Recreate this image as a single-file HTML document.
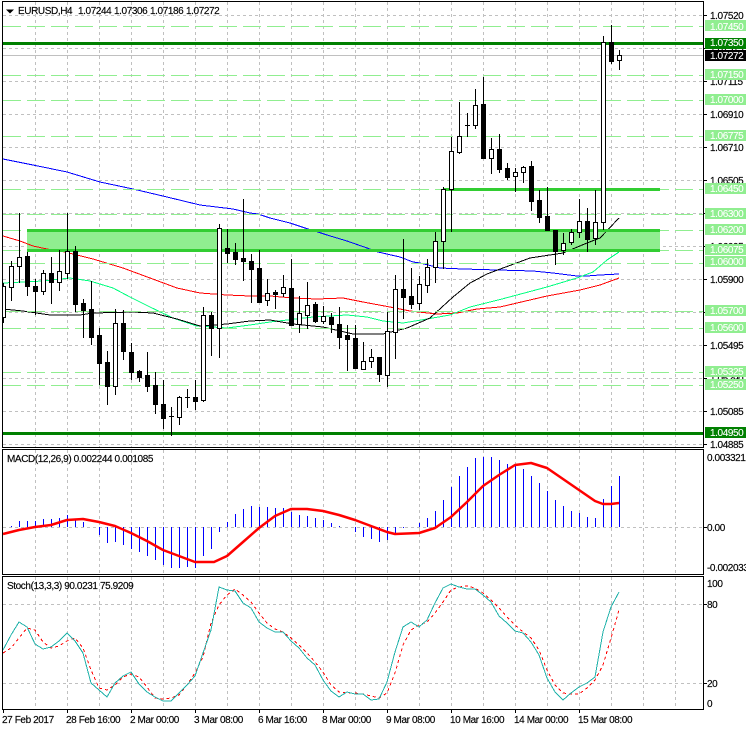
<!DOCTYPE html>
<html><head><meta charset="utf-8"><style>
html,body{margin:0;padding:0;background:#fff;width:746px;height:731px;overflow:hidden}
svg{display:block}
text{font-family:"Liberation Sans",sans-serif;font-size:10px;letter-spacing:-.4px;fill:#000;stroke:#000;stroke-width:.15px}
text.w{fill:#fff;stroke:#fff;stroke-width:.1px}
.ma{fill:none;stroke-width:1;shape-rendering:crispEdges}
.c{shape-rendering:crispEdges}
</style></head><body>
<svg width="746" height="731" viewBox="0 0 746 731" xmlns="http://www.w3.org/2000/svg">
<rect width="746" height="731" fill="#fff"/>
<!-- grid -->
<g class="c" fill="none" stroke="#c0c0c0" stroke-dasharray="3 3">
<path d="M3 15.500H703M3 48.500H703M3 81.500H703M3 114.500H703M3 147.500H703M3 180.500H703M3 213.500H703M3 246.500H703M3 279.500H703M3 312.500H703M3 345.500H703M3 378.500H703M3 411.500H703M3 444.500H703M3 527.500H703M3 604.500H703M3 683.500H703"/>
<path d="M35.500 2V447M67.500 2V447M99.500 2V447M131.500 2V447M163.500 2V447M195.500 2V447M227.500 2V447M259.500 2V447M291.500 2V447M323.500 2V447M355.500 2V447M387.500 2V447M419.500 2V447M451.500 2V447M483.500 2V447M515.500 2V447M547.500 2V447M579.500 2V447M611.500 2V447M643.500 2V447M675.500 2V447"/>
<path d="M35.500 450V574M67.500 450V574M99.500 450V574M131.500 450V574M163.500 450V574M195.500 450V574M227.500 450V574M259.500 450V574M291.500 450V574M323.500 450V574M355.500 450V574M387.500 450V574M419.500 450V574M451.500 450V574M483.500 450V574M515.500 450V574M547.500 450V574M579.500 450V574M611.500 450V574M643.500 450V574M675.500 450V574"/>
<path d="M35.500 577V709M67.500 577V709M99.500 577V709M131.500 577V709M163.500 577V709M195.500 577V709M227.500 577V709M259.500 577V709M291.500 577V709M323.500 577V709M355.500 577V709M387.500 577V709M419.500 577V709M451.500 577V709M483.500 577V709M515.500 577V709M547.500 577V709M579.500 577V709M611.500 577V709M643.500 577V709M675.500 577V709"/>
</g>
<!-- zone fill -->
<rect x="27" y="230" width="633" height="20" fill="#90ee90"/>
<!-- moving averages -->
<polyline class="ma" stroke="#0000ff" points="3,159 33,165 67,172 100,182 133,189 167,197 200,205 233,209 250,213 258,214 270,218 290,223 308,229 318,232 327,235 347,241 367,248 378,252 400,257 413,262 420,263 440,268 463,269 533,271 553,273 577,276 587,276 600,275 619,274"/>
<polyline class="ma" stroke="#ff0000" points="3,236 20,241 33,246 47,249 65,252 93,259 123,268 150,278 177,288 200,293 227,295 250,296 270,296 293,298 317,299 343,298 363,302 390,307 410,311 437,314 457,313 477,309 500,307 547,296 580,290 600,285 619,278"/>
<polyline class="ma" stroke="#00ff7f" points="3,283 43,281 70,278 90,281 113,288 130,297 150,307 173,318 197,326 227,328 250,325 270,322 313,317 347,315 367,317 383,321 403,323 427,319 450,315 470,307 502,299 547,287 577,278 593,272 607,260 619,252"/>
<polyline class="ma" stroke="#000000" points="3,309 23,311 50,315 80,315 93,313 133,312 153,313 177,319 200,326 227,324 250,321 270,320 293,324 323,327 353,334 383,334 407,328 430,318 453,297 470,283 487,274 503,268 530,258 563,253 587,243 600,238 619,218"/>
<!-- light green horizontal levels -->
<g class="c" fill="none" stroke="#90ee90" stroke-dasharray="18 6">
<path d="M3 26.500H703M3 75.500H703M3 100.500H703M3 136.500H703M3 189.500H703M3 214.500H703M3 230.500H703M3 250.500H703M3 263.500H703M3 311.500H703M3 328.500H703M3 372.500H703M3 385.500H703"/>
</g>
<!-- solid levels -->
<g class="c" fill="#32cd32">
<rect x="443" y="188" width="217" height="3"/>
<rect x="27" y="229" width="633" height="3"/>
<rect x="27" y="249" width="633" height="3"/>
</g>
<rect x="3" y="55" width="700" height="1" fill="#c0c0c0" class="c"/>
<rect x="3" y="42" width="700" height="3" fill="#008000" class="c"/>
<rect x="3" y="432" width="700" height="3" fill="#008000" class="c"/>
<!-- candles -->
<path class="c" fill="none" stroke="#000" d="M3.500 283V323M11.500 261V301M19.500 213V283M27.500 252V296M35.500 279V315M43.500 270V295M51.500 257V304M59.500 250V291M67.500 213V279M75.500 246V312M83.500 299V338M91.500 281V345M99.500 328V385M107.500 351V405M115.500 309V395M123.500 310V360M131.500 343V380M139.500 370V382M147.500 352V392M155.500 372V414M163.500 380V429M171.500 407V436M179.500 396V425M187.500 389V408M195.500 380V410M203.500 307V402M211.500 312V356M219.500 224V358M227.500 229V263M235.500 243V265M243.500 199V281M251.500 254V303M259.500 250V303M267.500 279V306M275.500 290V309M283.500 275V297M291.500 259V325M299.500 296V333M307.500 282V329M315.500 302V323M323.500 306V324M331.500 313V333M339.500 307V349M347.500 325V371M355.500 325V369M363.500 342V369M371.500 349V368M379.500 357V382M387.500 312V387M395.500 275V359M403.500 239V319M411.500 268V309M419.500 276V310M427.500 259V293M435.500 232V283M443.500 187V269M451.500 137V232M459.500 102V154M467.500 113V137M475.500 89V129M483.500 77V158M491.500 138V174M499.500 134V173M507.500 163V180M515.500 168V192M523.500 166V183M531.500 161V211M539.500 190V223M547.500 187V231M555.500 230V265M563.500 233V255M571.500 229V245M579.500 199V238M587.500 208V252M595.500 190V245M603.500 36V230M611.500 25V64M619.500 50V70M169 416.500H174M185 397.500H190M465 125.500H470"/>
<path class="c" fill="#fff" stroke="#000" d="M2.500 286.500h3v31h-3zM9.500 266.500h4v21h-4zM17.500 257.500h4v9h-4zM41.500 273.500h4v18h-4zM57.500 271.500h4v11h-4zM65.500 251.500h4v22h-4zM113.500 323.500h4v63h-4zM177.500 397.500h4v20h-4zM201.500 315.500h4v85h-4zM217.500 228.500h4v100h-4zM265.500 293.500h4v7h-4zM281.500 287.500h4v6h-4zM297.500 313.500h4v11h-4zM305.500 305.500h4v10h-4zM321.500 316.500h4v5h-4zM361.500 361.500h4v8h-4zM369.500 357.500h4v4h-4zM385.500 331.500h4v44h-4zM393.500 289.500h4v43h-4zM417.500 284.500h4v19h-4zM425.500 267.500h4v18h-4zM433.500 241.500h4v26h-4zM441.500 189.500h4v52h-4zM449.500 151.500h4v38h-4zM457.500 136.500h4v16h-4zM473.500 105.500h4v20h-4zM489.500 149.500h4v9h-4zM513.500 172.500h4v4h-4zM521.500 167.500h4v5h-4zM561.500 243.500h4v7h-4zM569.500 232.500h4v10h-4zM577.500 221.500h4v11h-4zM593.500 222.500h4v16h-4zM601.500 42.500h4v180h-4zM617.500 55.500h4v5h-4z"/>
<path class="c" fill="#000" stroke="#000" d="M25.500 256.500h4v30h-4zM33.500 286.500h4v5h-4zM49.500 273.500h4v9h-4zM73.500 251.500h4v53h-4zM81.500 303.500h4v7h-4zM89.500 309.500h4v28h-4zM97.500 335.500h4v28h-4zM105.500 362.500h4v24h-4zM121.500 323.500h4v28h-4zM129.500 352.500h4v20h-4zM137.500 371.500h4v6h-4zM145.500 375.500h4v11h-4zM153.500 385.500h4v19h-4zM161.500 404.500h4v14h-4zM193.500 397.500h4v4h-4zM209.500 315.500h4v13h-4zM225.500 248.500h4v5h-4zM233.500 252.500h4v7h-4zM241.500 258.500h4v3h-4zM249.500 261.500h4v8h-4zM257.500 268.500h4v34h-4zM273.500 292.500h4v2h-4zM289.500 288.500h4v37h-4zM313.500 304.500h4v17h-4zM329.500 317.500h4v7h-4zM337.500 324.500h4v13h-4zM345.500 335.500h4v4h-4zM353.500 338.500h4v30h-4zM377.500 357.500h4v17h-4zM401.500 289.500h4v8h-4zM409.500 296.500h4v8h-4zM481.500 104.500h4v54h-4zM497.500 149.500h4v20h-4zM505.500 168.500h4v9h-4zM529.500 166.500h4v35h-4zM537.500 200.500h4v17h-4zM545.500 216.500h4v14h-4zM553.500 230.500h4v21h-4zM585.500 221.500h4v18h-4zM609.500 42.500h4v19h-4z"/>
<!-- MACD -->
<path class="c" fill="none" stroke="#0000ff" d="M11.500 527V526M19.500 527V521M27.500 527V521M35.500 527V521M43.500 527V519M51.500 527V519M59.500 527V518M67.500 527V515M75.500 527V519M83.500 527V522M99.500 527V535M107.500 527V543M115.500 527V542M123.500 527V545M131.500 527V549M139.500 527V552M147.500 527V556M155.500 527V560M163.500 527V565M171.500 527V568M179.500 527V568M187.500 527V567M195.500 527V568M203.500 527V556M211.500 527V549M219.500 527V532M227.500 527V522M235.500 527V514M243.500 527V509M251.500 527V506M259.500 527V507M267.500 527V507M275.500 527V508M283.500 527V508M291.500 527V512M299.500 527V515M307.500 527V516M315.500 527V518M323.500 527V520M331.500 527V523M339.500 527V526M355.500 527V532M363.500 527V537M371.500 527V539M379.500 527V542M387.500 527V540M395.500 527V534M403.500 527V528M419.500 527V523M427.500 527V518M435.500 527V511M443.500 527V500M451.500 527V487M459.500 527V476M467.500 527V467M475.500 527V458M483.500 527V457M491.500 527V457M499.500 527V460M507.500 527V464M515.500 527V466M523.500 527V469M531.500 527V476M539.500 527V483M547.500 527V491M555.500 527V500M563.500 527V506M571.500 527V511M579.500 527V513M587.500 527V517M595.500 527V518M603.500 527V499M611.500 527V486M619.500 527V476"/>
<polyline fill="none" stroke="#ff0000" stroke-width="2.500" stroke-linejoin="round" points="3,534 19,530 35,527 51,525 67,520 83,519 99,522 115,526 131,533 147,541 163,550 179,556 195,562 214,562 227,556 243,542 259,528 275,516 291,509 307,509 323,511 339,515 355,520 371,526 387,532 395,534 419,533 435,528 451,517 467,502 483,486 499,475 515,465 531,463 547,468 563,479 579,490 595,501 603,504 611,504 619,503"/>
<!-- Stoch -->
<polyline class="c" fill="none" stroke="#ff0000" stroke-dasharray="3 3" points="3,653 11,648 19,638 27,628 35,630 43,642 51,648 59,646 67,641 75,638 83,648 91,670 99,688 107,690 115,685 123,677 131,674 139,677 147,687 155,698 163,699 171,698 179,695 187,685 195,673 203,657 211,623 219,605 227,595 235,589 243,595 251,602 259,613 267,623 275,629 283,632 291,638 299,645 307,653 315,662 323,672 331,685 339,692 347,693 355,693 363,694 371,696 379,698 387,693 395,673 403,645 411,630 419,625 427,622 435,613 443,602 451,590 459,587 467,586 475,588 483,593 491,600 499,608 507,617 515,625 523,632 531,638 539,650 547,670 555,685 563,693 571,694 579,694 587,688 595,680 603,665 611,638 619,610"/>
<polyline class="c" fill="none" stroke="#20b2aa" points="3,650 11,635 19,622 27,627 35,644 43,649 51,647 59,641 67,633 75,641 83,653 91,683 99,690 107,697 115,683 123,676 131,672 139,684 147,692 155,697 163,701 171,701 179,693 187,685 195,676 203,653 211,630 219,587 227,590 235,591 243,603 251,608 259,622 267,628 275,632 283,632 291,641 299,648 307,658 315,665 323,680 331,691 339,697 347,692 355,694 363,694 371,700 379,699 387,682 395,652 403,627 411,622 419,627 427,620 435,603 443,588 451,584 459,587 467,589 475,589 483,595 491,602 499,616 507,623 515,631 523,633 531,642 539,655 547,678 555,692 563,700 571,693 579,687 587,683 595,677 603,632 611,607 619,592"/>
<!-- frames -->
<g class="c" fill="none" stroke="#000">
<path d="M2.500 1.500H703.500V447.500H2.500Z"/>
<path d="M2.500 449.500H703.500V574.500H2.500Z"/>
<path d="M2.500 576.500H703.500V709.500H2.500Z"/>
<path d="M704 15.500h3M704 48.500h3M704 81.500h3M704 114.500h3M704 147.500h3M704 180.500h3M704 213.500h3M704 246.500h3M704 279.500h3M704 312.500h3M704 345.500h3M704 378.500h3M704 411.500h3M704 444.500h3M704 527.500h3M704 604.500h3M704 683.500h3"/>
<path d="M3.500 710v3M67.500 710v3M131.500 710v3M195.500 710v3M259.500 710v3M323.500 710v3M387.500 710v3M451.500 710v3M515.500 710v3M579.500 710v3"/>
</g>
<!-- axis prices -->
<text x="710" y="19">1.07520</text>
<text x="710" y="52">1.07315</text>
<text x="710" y="85">1.07115</text>
<text x="710" y="118">1.06910</text>
<text x="710" y="151">1.06710</text>
<text x="710" y="184">1.06505</text>
<text x="710" y="250">1.06095</text>
<text x="710" y="283">1.05900</text>
<text x="710" y="349">1.05495</text>
<text x="710" y="382">1.05290</text>
<text x="710" y="415">1.05085</text>
<text x="710" y="448">1.04885</text>
<!-- level labels -->
<g fill="#90ee90" class="c">
<rect x="705" y="20" width="41" height="11"/>
<rect x="705" y="69" width="41" height="11"/>
<rect x="705" y="94" width="41" height="11"/>
<rect x="705" y="130" width="41" height="11"/>
<rect x="705" y="183" width="41" height="11"/>
<rect x="705" y="208" width="41" height="11"/>
<rect x="705" y="224" width="41" height="11"/>
<rect x="705" y="244" width="41" height="11"/>
<rect x="705" y="256" width="41" height="11"/>
<rect x="705" y="305" width="41" height="11"/>
<rect x="705" y="322" width="41" height="11"/>
<rect x="705" y="366" width="41" height="11"/>
<rect x="705" y="379" width="41" height="11"/>
</g>
<rect x="705" y="38" width="41" height="11" fill="#008000" class="c"/>
<rect x="705" y="427" width="41" height="11" fill="#008000" class="c"/>
<rect x="705" y="50" width="41" height="11" fill="#000" class="c"/>
<text class="w" x="710" y="30">1.07450</text>
<text class="w" x="710" y="46">1.07350</text>
<text class="w" x="710" y="59">1.07272</text>
<text class="w" x="710" y="78">1.07150</text>
<text class="w" x="710" y="103">1.07000</text>
<text class="w" x="710" y="139">1.06775</text>
<text class="w" x="710" y="192">1.06450</text>
<text class="w" x="710" y="217">1.06300</text>
<text class="w" x="710" y="233">1.06200</text>
<text class="w" x="710" y="253">1.06075</text>
<text class="w" x="710" y="265">1.06000</text>
<text class="w" x="710" y="314">1.05700</text>
<text class="w" x="710" y="331">1.05600</text>
<text class="w" x="710" y="375">1.05325</text>
<text class="w" x="710" y="388">1.05250</text>
<text class="w" x="710" y="436">1.04950</text>
<!-- sub window axis -->
<text x="707" y="461">0.003321</text>
<text x="707" y="531">0.00</text>
<text x="707" y="571">-0.002033</text>
<text x="707" y="587">100</text>
<text x="707" y="608">80</text>
<text x="707" y="687">20</text>
<text x="707" y="707">0</text>
<!-- titles -->
<path d="M6 9.500h8l-4 4z" fill="#000"/>
<text x="18" y="14">EURUSD,H4</text>
<text x="78" y="14">1.07244</text>
<text x="114" y="14">1.07306</text>
<text x="150" y="14">1.07186</text>
<text x="186" y="14">1.07272</text>
<text x="7" y="462">MACD(12,26,9) 0.002244 0.001085</text>
<text x="7" y="589">Stoch(13,3,3) 90.0231 75.9209</text>
<!-- time axis -->
<text x="2" y="723">27 Feb 2017</text>
<text x="66" y="723">28 Feb 16:00</text>
<text x="130" y="723">2 Mar 00:00</text>
<text x="194" y="723">3 Mar 08:00</text>
<text x="258" y="723">6 Mar 16:00</text>
<text x="322" y="723">8 Mar 00:00</text>
<text x="386" y="723">9 Mar 08:00</text>
<text x="450" y="723">10 Mar 16:00</text>
<text x="514" y="723">14 Mar 00:00</text>
<text x="578" y="723">15 Mar 08:00</text>
</svg>
</body></html>
